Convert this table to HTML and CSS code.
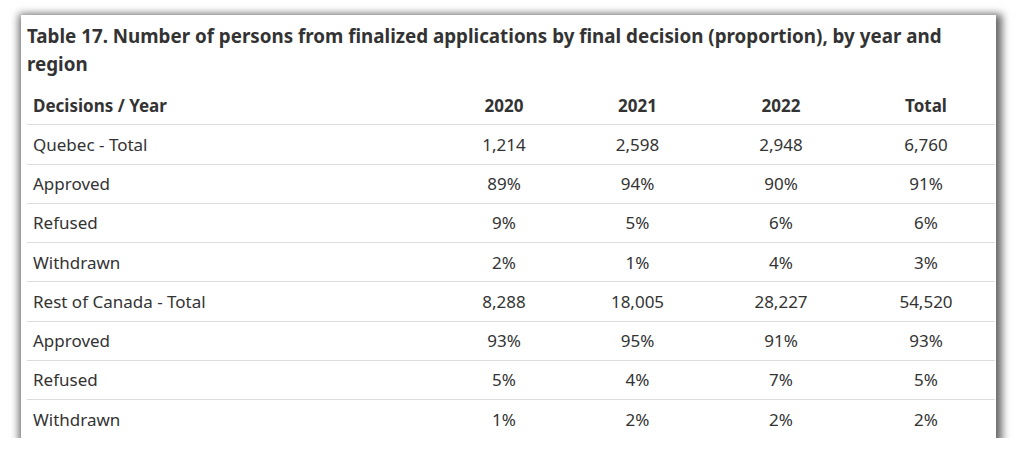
FILE: index.html
```html
<!DOCTYPE html>
<html lang="en">
<head>
<meta charset="utf-8">
<title>Table 17</title>
<link rel="stylesheet" href="styles.css">
</head>
<body>
<div class="page">
  <div class="card">
    <table class="data">
      <caption>Table 17. Number of persons from finalized applications by final decision (proportion), by year and region</caption>
      <colgroup>
        <col class="c-label">
        <col class="c-2020">
        <col class="c-2021">
        <col class="c-2022">
        <col class="c-total">
      </colgroup>
      <thead>
        <tr><th class="lbl">Decisions / Year</th><th>2020</th><th>2021</th><th>2022</th><th>Total</th></tr>
      </thead>
      <tbody>
        <tr><td class="lbl">Quebec - Total</td><td>1,214</td><td>2,598</td><td>2,948</td><td>6,760</td></tr>
        <tr><td class="lbl">Approved</td><td>89%</td><td>94%</td><td>90%</td><td>91%</td></tr>
        <tr><td class="lbl">Refused</td><td>9%</td><td>5%</td><td>6%</td><td>6%</td></tr>
        <tr><td class="lbl">Withdrawn</td><td>2%</td><td>1%</td><td>4%</td><td>3%</td></tr>
        <tr><td class="lbl">Rest of Canada - Total</td><td>8,288</td><td>18,005</td><td>28,227</td><td>54,520</td></tr>
        <tr><td class="lbl">Approved</td><td>93%</td><td>95%</td><td>91%</td><td>93%</td></tr>
        <tr><td class="lbl">Refused</td><td>5%</td><td>4%</td><td>7%</td><td>5%</td></tr>
        <tr><td class="lbl">Withdrawn</td><td>1%</td><td>2%</td><td>2%</td><td>2%</td></tr>
      </tbody>
    </table>
  </div>
</div>
</body>
</html>
```
FILE: styles.css
```css
html, body {
  margin: 0;
  padding: 0;
  background: #ffffff;
}
body {
  font-family: "Noto Sans", "Open Sans", sans-serif;
  color: #333333;
}
.page {
  padding: 15px 0 0 21px;
}
.card {
  width: 969px;
  height: 423px;
  padding: 0 0 0 6px;
  background: #ffffff;
  box-shadow: 2px 3px 8px 4px rgba(0, 0, 0, 0.6);
  overflow: hidden;
}
.data {
  width: 968px;
  border-collapse: collapse;
  font-size: 17px;
}
.data caption {
  text-align: left;
  font-weight: 700;
  font-size: 18.8px;
  line-height: 28px;
  padding: 7px 0 8px 0;
  color: #333333;
}
.c-label { width: 411px; }
.c-2020 { width: 132px; }
.c-2021 { width: 135px; }
.c-2022 { width: 152px; }
.c-total { width: 138px; }
.data th, .data td {
  padding: 0 6px;
  height: 38.25px;
  text-align: center;
  vertical-align: middle;
}
.data th {
  font-weight: 700;
}
.data tbody td {
  border-top: 1px solid #dddddd;
}
.data .lbl {
  text-align: left;
}
```
